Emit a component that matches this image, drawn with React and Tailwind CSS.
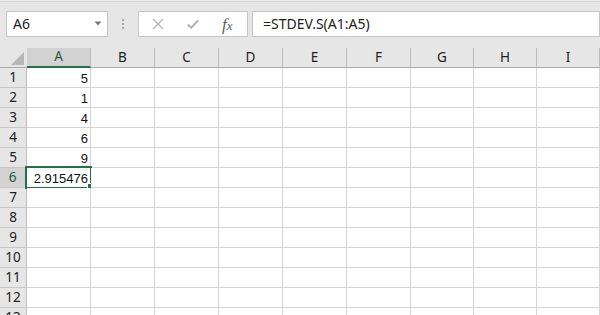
import React from "react";

const cols = ["A", "B", "C", "D", "E", "F", "G", "H", "I"];
const values = { 1: "5", 2: "1", 3: "4", 4: "6", 5: "9", 6: "2.915476" };
const gridCols = "grid grid-cols-[27px_repeat(6,64px)_63px_63px_1fr]";

function Toolbar() {
  return (
    <div className="h-[47px] shrink-0 bg-[#e6e6e6] border-t border-[#d6d6d6] mt-[1px] flex items-start pt-[9px]">
      <div className="ml-[6px] w-[102px] h-[26px] border border-[#c6c6c6] bg-white flex items-center relative">
        <span className="ml-[6px] text-[14px] text-[#222] font-['Noto_Sans',sans-serif] leading-none">A6</span>
        <svg className="absolute left-[87px] top-[9px]" width="8" height="5" viewBox="0 0 8 5">
          <path d="M0.5 0.5 L7.5 0.5 L4 4.5 Z" fill="#7a7a7a" />
        </svg>
      </div>
      <div className="w-[30px] h-[26px] flex flex-col items-center justify-center gap-[2px]">
        <div className="w-[2px] h-[2px] bg-[#a8a8a8]" />
        <div className="w-[2px] h-[2px] bg-[#a8a8a8]" />
        <div className="w-[2px] h-[2px] bg-[#a8a8a8]" />
      </div>
      <div className="w-[110px] h-[26px] border border-[#c6c6c6] bg-white flex items-center pl-[13px] gap-[23px]">
        <svg width="12" height="12" viewBox="0 0 12 12">
          <path d="M1 1 L11 11 M11 1 L1 11" stroke="#b4b4b4" strokeWidth="1.3" fill="none" />
        </svg>
        <svg width="12" height="12" viewBox="0 0 12 12">
          <path d="M0.8 6.5 L4.2 9.8 L11.2 2.2" stroke="#b4b4b4" strokeWidth="2" fill="none" />
        </svg>
        <span className="text-[17px] italic text-[#606060] font-['Liberation_Serif',serif] leading-none">
          f<span className="text-[13px]">x</span>
        </span>
      </div>
      <div className="ml-[4px] flex-1 h-[26px] border border-[#c6c6c6] bg-white flex items-center">
        <span className="ml-[10px] text-[14px] text-[#222] font-['Noto_Sans',sans-serif] leading-none">=STDEV.S(A1:A5)</span>
      </div>
    </div>
  );
}

function HeaderRow() {
  return (
    <div className={`${gridCols} h-[20px] shrink-0`}>
      <div className="bg-[#e6e6e6] border-b border-[#ababab] relative">
        <svg className="absolute left-[11px] top-[4px]" width="13" height="13" viewBox="0 0 13 13">
          <path d="M13 0 L13 13 L0 13 Z" fill="#b5b5b5" />
        </svg>
      </div>
      {cols.map((c) => {
        const sel = c === "A";
        return (
          <div
            key={c}
            className={
              sel
                ? "bg-[#d2d2d2] border-r border-[#bcbcbc] border-b-2 border-b-[#217346] flex items-center justify-center text-[13.5px] text-[#1e5e3a] font-['Noto_Sans',sans-serif]"
                : "bg-[#e6e6e6] border-r border-[#bcbcbc] border-b border-b-[#ababab] flex items-center justify-center text-[13.5px] text-[#222] font-['Noto_Sans',sans-serif]"
            }
          >
            <span className="leading-none">{c}</span>
          </div>
        );
      })}
    </div>
  );
}

function Row({ n }) {
  const sel = n === 6;
  return (
    <div className={`${gridCols} h-[20px] shrink-0`}>
      <div
        className={
          sel
            ? "bg-[#d2d2d2] border-r-2 border-r-[#217346] border-b border-b-[#c6c6c6] flex items-center justify-center text-[13.5px] text-[#1e5e3a] font-['Noto_Sans',sans-serif]"
            : "bg-[#e6e6e6] border-r border-r-[#bfbfbf] border-b border-b-[#c6c6c6] flex items-center justify-center text-[13.5px] text-[#222] font-['Noto_Sans',sans-serif]"
        }
      >
        <span className="leading-none">{n}</span>
      </div>
      {cols.map((c) => {
        const isA = c === "A";
        return (
          <div key={c} className="bg-white border-r border-b border-[#d4d4d4] relative flex items-center justify-end pr-[2px] pt-[2px]">
            {isA && values[n] ? (
              <span className="text-[13px] text-[#111] font-['Liberation_Sans',sans-serif] leading-none">{values[n]}</span>
            ) : null}
            {isA && sel ? (
              <>
                <div className="absolute left-[-2px] top-[-2px] w-[67px] h-[23px] border-2 border-[#217346]" />
                <div className="absolute left-[60px] top-[15px] w-[7px] h-[7px] bg-[#217346] border border-white" />
              </>
            ) : null}
          </div>
        );
      })}
    </div>
  );
}

export default function App() {
  const rows = Array.from({ length: 13 }, (_, i) => i + 1);
  return (
    <div className="w-[600px] h-[315px] overflow-hidden bg-[#ececec] flex flex-col">
      <Toolbar />
      <HeaderRow />
      {rows.map((n) => (
        <Row key={n} n={n} />
      ))}
    </div>
  );
}
